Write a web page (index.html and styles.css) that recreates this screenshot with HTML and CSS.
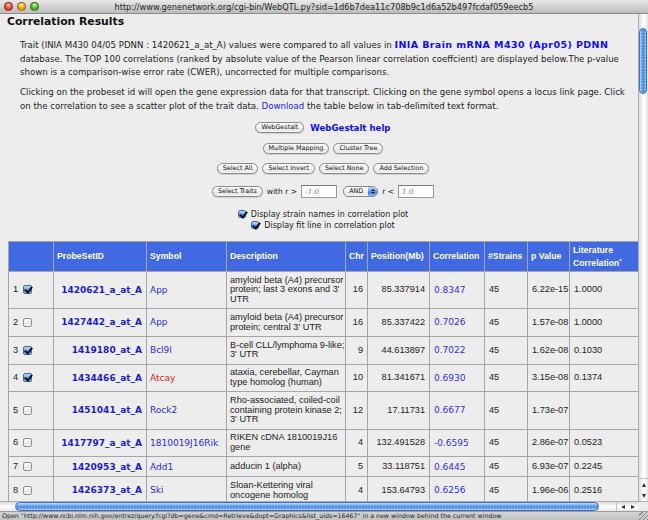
FILE: index.html
```html
<!DOCTYPE html>
<html>
<head>
<meta charset="utf-8">
<title>Correlation Results</title>
<link rel="stylesheet" href="styles.css">
</head>
<body>
<div class="window">
  <div class="titlebar">
    <div class="lights"><span class="light red"></span><span class="light yellow"></span><span class="light green"></span></div>
    <div class="url">http://www.genenetwork.org/cgi-bin/WebQTL.py?sid=1d6b7dea11c708b9c1d6a52b497fcdaf059eecb5</div>
    <div></div>
  </div>
  <div class="viewport">
    <div class="page">
      <h1 class="title">Correlation Results</h1>
      <p class="intro">Trait (INIA M430 04/05 PDNN : 1420621_a_at_A) values were compared to all values in <a class="strong db">INIA Brain mRNA M430 (Apr05) PDNN</a><br>database. The TOP 100 correlations (ranked by absolute value of the Pearson linear correlation coeffcient) are displayed below.The p-value<br>shown is a comparison-wise error rate (CWER), uncorrected for multiple comparisons.</p>
      <p class="intro second">Clicking on the probeset id will open the gene expression data for that transcript. Clicking on the gene symbol opens a locus link page. Click<br>on the correlation to see a scatter plot of the trait data. <a class="link">Download</a> the table below in tab-delimited text format.</p>
      <div class="controls">
        <div class="row r-gestalt"><button class="btn">WebGestalt</button><a class="strong help">WebGestalt help</a></div>
        <div class="row"><button class="btn">Multiple Mapping</button><button class="btn">Cluster Tree</button></div>
        <div class="row"><button class="btn">Select All</button><button class="btn">Select Invert</button><button class="btn">Select None</button><button class="btn">Add Selection</button></div>
        <div class="row r-traits"><button class="btn">Select Traits</button><span class="lbl">with r &gt;</span><span class="field">-1.0</span><span class="select">AND<span class="stepper"><i class="up"></i><i class="down"></i></span></span><span class="lbl">r &lt;</span><span class="field">1.0</span></div>
        <div class="check-row first"><span class="cb on small"></span><span class="lbl">Display strain names in correlation plot</span></div>
        <div class="check-row"><span class="cb on small"></span><span class="lbl">Display fit line in correlation plot</span></div>
      </div>
      <table class="results">
        <colgroup>
          <col class="c-sel"><col class="c-id"><col class="c-sym"><col class="c-desc"><col class="c-chr"><col class="c-pos"><col class="c-cor"><col class="c-str"><col class="c-p"><col class="c-lit">
        </colgroup>
        <thead>
          <tr><th></th><th>ProbeSetID</th><th>Symbol</th><th>Description</th><th>Chr</th><th>Position(Mb)</th><th>Correlation</th><th>#Strains</th><th>p Value</th><th>Literature<br>Correlation<sup>*</sup></th></tr>
        </thead>
        <tbody>
          <tr><td class="sel">1 <span class="cb on"></span></td><td class="id"><a>1420621_a_at_A</a></td><td class="sym"><a>App</a></td><td class="desc">amyloid beta (A4) precursor<br>protein; last 3 exons and 3'<br>UTR</td><td class="num">16</td><td class="num">85.337914</td><td class="cor"><a>0.8347</a></td><td>45</td><td class="num">6.22e-15</td><td>1.0000</td></tr>
          <tr><td class="sel">2 <span class="cb"></span></td><td class="id"><a>1427442_a_at_A</a></td><td class="sym"><a>App</a></td><td class="desc">amyloid beta (A4) precursor<br>protein; central 3' UTR</td><td class="num">16</td><td class="num">85.337422</td><td class="cor"><a>0.7026</a></td><td>45</td><td class="num">1.57e-08</td><td>1.0000</td></tr>
          <tr><td class="sel">3 <span class="cb on"></span></td><td class="id"><a>1419180_at_A</a></td><td class="sym"><a>Bcl9l</a></td><td class="desc">B-cell CLL/lymphoma 9-like;<br>3' UTR</td><td class="num">9</td><td class="num">44.613897</td><td class="cor"><a>0.7022</a></td><td>45</td><td class="num">1.62e-08</td><td>0.1030</td></tr>
          <tr><td class="sel">4 <span class="cb on"></span></td><td class="id"><a>1434466_at_A</a></td><td class="sym"><a class="hot">Atcay</a></td><td class="desc">ataxia, cerebellar, Cayman<br>type homolog (human)</td><td class="num">10</td><td class="num">81.341671</td><td class="cor"><a>0.6930</a></td><td>45</td><td class="num">3.15e-08</td><td>0.1374</td></tr>
          <tr><td class="sel">5 <span class="cb"></span></td><td class="id"><a>1451041_at_A</a></td><td class="sym"><a>Rock2</a></td><td class="desc">Rho-associated, coiled-coil<br>containing protein kinase 2;<br>3' UTR</td><td class="num">12</td><td class="num">17.11731</td><td class="cor"><a>0.6677</a></td><td>45</td><td class="num">1.73e-07</td><td></td></tr>
          <tr><td class="sel">6 <span class="cb"></span></td><td class="id"><a>1417797_a_at_A</a></td><td class="sym"><a>1810019J16Rik</a></td><td class="desc">RIKEN cDNA 1810019J16<br>gene</td><td class="num">4</td><td class="num">132.491528</td><td class="cor"><a>-0.6595</a></td><td>45</td><td class="num">2.86e-07</td><td>0.0523</td></tr>
          <tr><td class="sel">7 <span class="cb"></span></td><td class="id"><a>1420953_at_A</a></td><td class="sym"><a>Add1</a></td><td class="desc">adducin 1 (alpha)</td><td class="num">5</td><td class="num">33.118751</td><td class="cor"><a>0.6445</a></td><td>45</td><td class="num">6.93e-07</td><td>0.2245</td></tr>
          <tr><td class="sel">8 <span class="cb"></span></td><td class="id"><a>1426373_at_A</a></td><td class="sym"><a>Ski</a></td><td class="desc">Sloan-Kettering viral<br>oncogene homolog</td><td class="num">4</td><td class="num">153.64793</td><td class="cor"><a>0.6256</a></td><td>45</td><td class="num">1.96e-06</td><td>0.2516</td></tr>
        </tbody>
      </table>
    </div>
    <div class="vscroll">
      <div class="vtrack"><div class="vthumb"></div></div>
      <div class="varrows"><span class="arrow a-up"></span><span class="arrow a-down"></span></div>
    </div>
  </div>
  <div class="hbar">
    <div class="htrack"><div class="hthumb"></div></div>
    <div class="harrows"><span class="arrow a-left"></span><span class="arrow a-right"></span></div>
    <div class="corner"></div>
  </div>
  <div class="status">
    <span class="status-text">Open "http://www.ncbi.nlm.nih.gov/entrez/query.fcgi?db=gene&amp;cmd=Retrieve&amp;dopt=Graphics&amp;list_uids=16467" in a new window behind the current window</span>
    <span class="grip"></span>
  </div>
</div>
</body>
</html>
```

FILE: styles.css
```css
* { box-sizing: border-box; }
html, body { margin: 0; padding: 0; }
body {
  width: 648px;
  height: 520px;
  overflow: hidden;
  background: #ededed;
  font-family: "DejaVu Sans", sans-serif;
  color: #222;
}
.window {
  width: 648px;
  height: 520px;
  display: flex;
  flex-direction: column;
}

/* title bar */
.titlebar {
  height: 14px;
  flex: none;
  display: grid;
  grid-template-columns: 1fr auto 1fr;
  align-items: center;
  background: linear-gradient(#e9e9e9, #d2d2d2 50%, #bcbcbc);
  border-bottom: 1px solid #8c8c8c;
}
.lights { display: flex; gap: 4px; padding-left: 4px; }
.light {
  width: 9px;
  height: 9px;
  border-radius: 50%;
  border: 1px solid rgba(0,0,0,0.35);
}
.red { background: radial-gradient(circle at 50% 30%, #ffc2b8 0, #f0523f 45%, #b3261a 100%); }
.yellow { background: radial-gradient(circle at 50% 30%, #ffefb0 0, #f4b324 45%, #b07810 100%); }
.green { background: radial-gradient(circle at 50% 30%, #d8f7b4 0, #5fbe3a 45%, #2c7f17 100%); }
.url { font-size: 8.2px; line-height: 12px; color: #1e1e1e; white-space: nowrap; }

/* viewport */
.viewport { flex: 1; display: flex; min-height: 0; }
.page {
  flex: 1;
  min-width: 0;
  overflow: hidden;
  padding-left: 8px;
}
.title {
  margin: 0 0 0 -1px;
  font: bold 10.8px/16px "DejaVu Sans", sans-serif;
  color: #111;
}
.intro {
  margin: 8px 0 0 12px;
  font-size: 8.6px;
  line-height: 13.5px;
  color: #222;
  white-space: nowrap;
}
.intro.second { margin-top: 6.5px; }
.strong { font-weight: bold; color: #1010e8; }
.strong.db { font-size: 9.5px; letter-spacing: 0.4px; }
.link { color: #1a1ae0; }

/* controls */
.controls {
  width: 630px;
  display: flex;
  flex-direction: column;
  align-items: center;
  margin-top: 7.5px;
}
.row {
  display: flex;
  align-items: center;
  justify-content: center;
  gap: 4px;
  height: 14px;
}
.row + .row { margin-top: 6.5px; }
.row.r-gestalt { gap: 6px; }
.row.r-traits { margin-top: 9px; }
.help { font-size: 8.6px; }
.btn {
  font: 6.4px/9px "DejaVu Sans", sans-serif;
  color: #111;
  height: 11px;
  padding: 0 5px;
  border: 1px solid #8a8a8a;
  border-radius: 6px;
  background: linear-gradient(#ffffff, #f4f4f4 50%, #e2e2e2 51%, #f3f3f3);
  box-shadow: 0 1px 0 rgba(0,0,0,0.12);
  margin: 0;
}
.lbl { font-size: 7.6px; color: #222; white-space: nowrap; }
.check-row .lbl { font-size: 8px; }
.field {
  width: 36px;
  height: 13px;
  background: #fff;
  border: 1px solid #9a9a9a;
  border-top-color: #777;
  font: italic 7.2px/11px "DejaVu Serif", serif;
  color: #777;
  padding-left: 3px;
}
.select {
  display: flex;
  align-items: center;
  width: 35px;
  height: 11px;
  margin-left: 2px;
  border: 1px solid #8a8a8a;
  border-radius: 5px;
  background: linear-gradient(#ffffff, #f2f2f2 50%, #e0e0e0 51%, #f3f3f3);
  font: 6.4px/9px "DejaVu Sans", sans-serif;
  color: #111;
  padding-left: 5px;
  overflow: hidden;
}
.stepper {
  margin-left: auto;
  width: 9px;
  height: 100%;
  background: linear-gradient(#bcd8f8, #5b97e4 50%, #3a7ad8 51%, #86baf2);
  display: flex;
  flex-direction: column;
  align-items: center;
  justify-content: center;
  gap: 1px;
}
.stepper i { width: 0; height: 0; border-left: 2px solid transparent; border-right: 2px solid transparent; }
.stepper .up { border-bottom: 2px solid #0b1d3a; }
.stepper .down { border-top: 2px solid #0b1d3a; }
.check-row {
  display: flex;
  align-items: center;
  gap: 5px;
  height: 11px;
}
.check-row.first { margin-top: 10px; }

/* checkboxes */
.cb {
  display: inline-block;
  position: relative;
  width: 9px;
  height: 9px;
  border: 1px solid #8f8f8f;
  border-radius: 2px;
  background: linear-gradient(#ffffff, #ececec 50%, #dedede 51%, #f4f4f4);
  vertical-align: middle;
}
.cb.small { width: 8px; height: 8px; }
.cb.on {
  border-color: #45689c;
  background: linear-gradient(#c4ddf9, #6fa3e8 50%, #3f7fd9 51%, #93c3f4);
}
.cb.on::after {
  content: "";
  position: absolute;
  left: 2px;
  top: -1px;
  width: 3px;
  height: 6px;
  border: solid #10151f;
  border-width: 0 2px 2px 0;
  transform: rotate(38deg);
}

/* table */
.results {
  margin-top: 10.5px;
  border-collapse: collapse;
  table-layout: fixed;
  width: 630px;
  border: 1px solid #a5a5a5;
}
.c-sel { width: 45px; }
.c-id { width: 93px; }
.c-sym { width: 80px; }
.c-desc { width: 119px; }
.c-chr { width: 22px; }
.c-pos { width: 62px; }
.c-cor { width: 55px; }
.c-str { width: 43px; }
.c-p { width: 42px; }
.c-lit { width: 69px; }
.results th, .results td { border: 1px solid #a5a5a5; }
.results th {
  height: 30px;
  background: #4169e1;
  color: #fff;
  font: bold 8.7px/12.5px "Liberation Sans", sans-serif;
  text-align: left;
  padding: 0 2px 0 3px;
  white-space: nowrap;
}
.results th sup { font-size: 6px; vertical-align: 3px; line-height: 0; }
.results td {
  font: 9.2px/9.6px "Liberation Sans", sans-serif;
  color: #222;
  padding: 3.75px 3px 3.75px 4px;
  vertical-align: middle;
  white-space: nowrap;
}
.results td.sel { height: 20px; padding-left: 4px; }
.results td.sel .cb { margin-left: 2px; }
.results td.desc { padding-left: 3px; }
.results td.num { text-align: right; padding-right: 4px; }
.results td.id { text-align: right; padding-right: 4px; }
.results td.id a { font: bold 9px "DejaVu Sans", sans-serif; color: #1d1dc6; }
.results td.sym { padding-left: 3px; }
.results td.sym a { font: 9px "DejaVu Sans", sans-serif; color: #2b2bd2; }
.results td.sym a.hot { color: #f01818; }
.results td.cor a { font: 9px "DejaVu Sans", sans-serif; color: #3030dc; }

/* vertical scrollbar */
.vscroll {
  width: 10px;
  flex: none;
  display: flex;
  flex-direction: column;
  border-left: 1px solid #b0b0b0;
  background: linear-gradient(90deg, #dadada, #f6f6f6 35%, #ffffff 60%, #e2e2e2);
}
.vtrack { flex: 1; padding: 14px 1px 0 0; }
.vthumb {
  height: 66px;
  border-radius: 5px;
  border: 1px solid #3b6fbf;
  background:
    repeating-linear-gradient(0deg, rgba(255,255,255,0.18) 0 1px, transparent 1px 3px),
    linear-gradient(90deg, #a9cdf6, #4e8fe2 45%, #3b7ddb 55%, #8ec0f4);
}
.varrows { height: 23px; display: flex; flex-direction: column; align-items: center; border-top: 1px solid #c4c4c4; padding-top: 2px; gap: 3px; }
.arrow { width: 0; height: 0; display: block; }
.a-up { margin-top: 2px; border-left: 2.5px solid transparent; border-right: 2.5px solid transparent; border-bottom: 4px solid #333; }
.a-down { margin-top: 4px; border-left: 2.5px solid transparent; border-right: 2.5px solid transparent; border-top: 4px solid #333; }

/* horizontal scrollbar */
.hbar {
  height: 10px;
  flex: none;
  display: flex;
  background: linear-gradient(#d8d8d8, #f7f7f7 40%, #ffffff 60%, #e3e3e3);
  border-top: 1px solid #b0b0b0;
}
.htrack { width: 617px; padding: 0 17px 0 15px; border-right: 1px solid #c0c0c0; }
.hthumb {
  height: 100%;
  border-radius: 5px;
  border: 1px solid #3b6fbf;
  background:
    repeating-linear-gradient(90deg, rgba(255,255,255,0.2) 0 1px, transparent 1px 3px),
    linear-gradient(#b9d8fa, #5a98e6 45%, #3d7fdc 55%, #9cc9f5);
}
.harrows { width: 21px; display: flex; align-items: center; justify-content: center; gap: 6px; }
.a-left { border-top: 2.5px solid transparent; border-bottom: 2.5px solid transparent; border-right: 4px solid #333; }
.a-right { border-top: 2.5px solid transparent; border-bottom: 2.5px solid transparent; border-left: 4px solid #333; }
.corner { flex: 1; background: #ececec; }

/* status bar */
.status {
  height: 9px;
  flex: none;
  display: flex;
  align-items: center;
  background: linear-gradient(#d6d6d6, #c2c2c2);
  box-shadow: inset 0 1px 0 #9c9c9c;
  padding-left: 2px;
}
.status-text { font-size: 6.3px; line-height: 9px; color: #1e1e1e; white-space: nowrap; }
.grip {
  margin-left: auto;
  width: 9px;
  height: 8px;
  background: repeating-linear-gradient(135deg, transparent 0 2px, #8a8a8a 2px 3px);
}
```
